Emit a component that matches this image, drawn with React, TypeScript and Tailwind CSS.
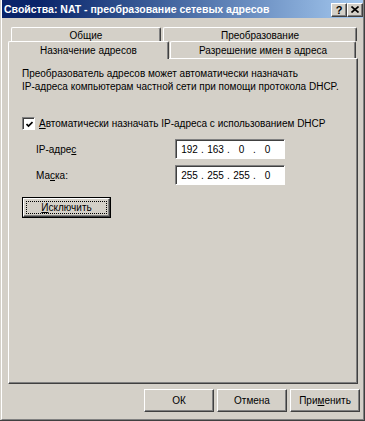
import React from "react";

function Btn({ children, className = "" }: { children: React.ReactNode; className?: string }) {
  return (
    <div
      className={
        "flex items-center justify-center bg-[#d4d0c8] border border-t-white border-l-white border-r-[#404040] border-b-[#404040] shadow-[inset_-1px_-1px_0_#808080] " +
        className
      }
    >
      {children}
    </div>
  );
}

function Field({ parts }: { parts: string[] }) {
  return (
    <div className="w-[110px] h-[20px] bg-white border border-t-[#808080] border-l-[#808080] border-r-white border-b-white shadow-[inset_1px_1px_0_#404040] flex items-center pl-[4px]">
      {parts.map((p, i) => (
        <React.Fragment key={i}>
          {i > 0 && <span className="w-[7px] text-center">.</span>}
          <span className="w-[19px] text-center">{p}</span>
        </React.Fragment>
      ))}
    </div>
  );
}

export default function App() {
  return (
    <div className="w-[365px] h-[421px] bg-[#d4d0c8] pl-px border-r border-b border-[#404040] font-['Liberation_Sans',Arial,sans-serif] text-[10px] leading-[13px] text-black overflow-hidden whitespace-nowrap">
      <div className="h-full flex flex-col border-l border-white border-r border-b border-r-[#808080] border-b-[#808080]">
        {/* Title bar */}
        <div className="h-[18px] shrink-0 flex items-center bg-linear-to-r from-[#0a246a] from-10% to-[#a6caf0] pl-[2px]">
          <span className="flex-1 text-white font-bold text-[10.5px]">
            Свойства: NAT - преобразование сетевых адресов
          </span>
          <div className="flex mt-px">
            <Btn className="w-[16px] h-[14px]">
              <span className="font-bold text-[11px] leading-[11px] mt-px">?</span>
            </Btn>
            <Btn className="w-[16px] h-[14px]">
              <svg width="8" height="7" viewBox="0 0 8 7">
                <path d="M0.5 0.5 L7.5 6.5 M7.5 0.5 L0.5 6.5" stroke="black" strokeWidth="1.6" fill="none" />
              </svg>
            </Btn>
          </div>
        </div>

        {/* Tabs */}
        <div className="ml-[6px] mt-[9px] w-[350px] flex flex-col">
          <div className="flex h-[14px] ml-[3px]">
            <div className="w-[150px] h-[14px] border-t border-l border-white border-r border-r-[#404040] shadow-[inset_-1px_0_0_#808080] rounded-tl-[2px] rounded-tr-[2px] flex justify-center pt-px">
              Общие
            </div>
            <div className="w-[194px] h-[14px] ml-[2px] border-t border-l border-white border-r border-r-[#404040] shadow-[inset_-1px_0_0_#808080] rounded-tl-[2px] rounded-tr-[2px] flex justify-center pt-px">
              Преобразование
            </div>
          </div>
          <div className="flex h-[17px]">
            <div className="relative z-10 w-[161px] h-[18px] bg-[#d4d0c8] border-t border-l border-white border-r border-r-[#404040] shadow-[inset_-1px_0_0_#808080] rounded-tl-[2px] rounded-tr-[2px] flex justify-center pt-[2px]">
              Назначение адресов
            </div>
            <div className="w-[186px] h-[17px] ml-px border-t border-l border-white border-r border-r-[#404040] shadow-[inset_-1px_0_0_#808080] rounded-tl-[2px] rounded-tr-[2px] flex justify-center pt-[2px]">
              Разрешение имен в адреса
            </div>
          </div>

          {/* Panel */}
          <div className="h-[326px] border border-t-white border-l-white border-r-[#404040] border-b-[#404040] shadow-[inset_-1px_-1px_0_#808080] flex flex-col pl-[13px] pt-[8px]">
            <p>
              Преобразователь адресов может автоматически назначать
              <br />
              IP-адреса компьютерам частной сети при помощи протокола DHCP.
            </p>

            <div className="flex items-center mt-[24px] h-[13px]">
              <div className="w-[13px] h-[13px] bg-white border border-t-[#808080] border-l-[#808080] border-r-white border-b-white shadow-[inset_1px_1px_0_#404040] flex items-center justify-center">
                <svg width="7" height="7" viewBox="0 0 7 7" className="ml-px mt-px">
                  <polyline points="0.5,3 2.5,5 6.5,1" stroke="black" strokeWidth="1.7" fill="none" />
                </svg>
              </div>
              <span className="ml-[4px]">
                <u>А</u>втоматически назначать IP-адреса с использованием DHCP
              </span>
            </div>

            <div className="flex items-center mt-[9px]">
              <span className="w-[153px] pl-[14px]">
                IP-адре<u>с</u>
              </span>
              <Field parts={["192", "163", "0", "0"]} />
            </div>

            <div className="flex items-center mt-[6px]">
              <span className="w-[153px] pl-[14px]">
                Ма<u>с</u>ка:
              </span>
              <Field parts={["255", "255", "255", "0"]} />
            </div>

            <div className="mt-[12px] w-[89px] h-[21px] border border-black">
              <Btn className="w-full h-full">
                <div className="w-[81px] h-[13px] border border-dotted border-black flex items-center justify-center">
                  <span>
                    <u>И</u>сключить
                  </span>
                </div>
              </Btn>
            </div>
          </div>
        </div>

        {/* Bottom buttons */}
        <div className="flex justify-end gap-[3px] mt-[5px] mr-[3px]">
          <Btn className="w-[70px] h-[23px]">ОК</Btn>
          <Btn className="w-[70px] h-[23px]">Отмена</Btn>
          <Btn className="w-[70px] h-[23px]">
            <span>
              При<u>м</u>енить
            </span>
          </Btn>
        </div>
      </div>
    </div>
  );
}
